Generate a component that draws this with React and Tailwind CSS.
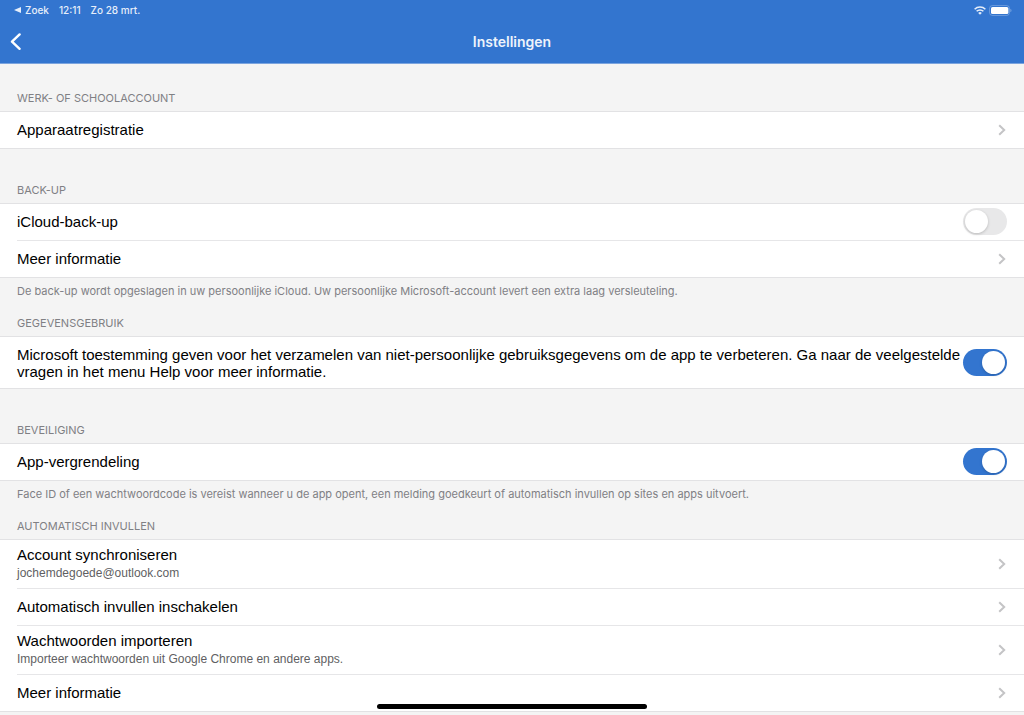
import React, { useState } from 'react';

const Chevron = () => (
    <svg className="mr-px h-3 w-2 shrink-0" viewBox="0 0 8 12" fill="none" stroke="#c4c4c6" strokeWidth="2" aria-hidden="true">
        <path d="M1.2 1.2 6.2 6 1.2 10.8" />
    </svg>
);

const Section = ({ title, compact, note, children }) => (
    <section>
        <h2 className={`flex items-end px-[17px] pb-[5px] font-[Inter,sans-serif] text-[11px] leading-4 text-[#808084] ${compact ? 'h-[30px]' : 'h-[54px]'}`}>
            {title}
        </h2>
        <div className="border-y border-[#e2e2e4] bg-white">{children}</div>
        {note && <p className="px-[17px] pt-[5px] pb-[7px] font-[Inter,sans-serif] text-[11px] leading-4 text-[#808084]">{note}</p>}
    </section>
);

const LinkRow = ({ label, detail, divider }) => (
    <div className="pl-[17px]">
        <button
            type="button"
            className={`box-content flex w-full items-center justify-between text-left ${detail ? 'h-12' : 'h-9'} ${divider ? 'border-t border-[#e6e6e8]' : ''}`}
        >
            <span className="flex flex-col">
                <span className="text-[15px] leading-[18px]">{label}</span>
                {detail && <span className="text-[12px] leading-[18px] text-[#5f5f63]">{detail}</span>}
            </span>
            <span className="pr-[17px]"><Chevron /></span>
        </button>
    </div>
);

const SwitchRow = ({ id, label, initial }) => {
    const [on, setOn] = useState(initial);

    return (
        <div className="flex min-h-9 items-center justify-between px-[17px] pb-px">
            <label htmlFor={id} className="text-[15px] leading-[17px]">{label}</label>
            <input
                id={id}
                type="checkbox"
                role="switch"
                checked={on}
                onChange={() => setOn(!on)}
                className="h-[27px] w-11 shrink-0 cursor-pointer appearance-none rounded-full bg-[#e8e8e9] p-[2px] transition-colors before:block before:size-[23px] before:rounded-full before:bg-white before:shadow-[0_1px_3px_rgba(0,0,0,0.2)] before:content-[''] checked:bg-[#3375cf] checked:before:ml-[17px]"
            />
        </div>
    );
};

const StatusBar = () => (
    <div className="flex h-5 items-center justify-between pr-3 pl-3.5 font-[Inter,sans-serif] text-[10px] font-medium text-[#e6eefa]">
        <div className="flex items-center">
            <svg className="mr-1 h-1.5 w-[7px]" viewBox="0 0 7 6" fill="currentColor" aria-hidden="true">
                <path d="M7 0v6L0 3z" />
            </svg>
            <span className="mr-2.5">Zoek</span>
            <span className="mr-2.5">12:11</span>
            <span>Zo 28 mrt.</span>
        </div>
        <div className="flex items-center gap-[3px]">
            <svg className="h-[9px] w-3" viewBox="0 0 12 9" fill="none" stroke="currentColor" strokeWidth="1.5" aria-hidden="true">
                <path d="M.6 3.3a7.6 7.6 0 0 1 10.8 0M2.6 5.3a4.8 4.8 0 0 1 6.8 0" />
                <path d="M4.2 6.9a2.5 2.5 0 0 1 3.6 0L6 8.8z" fill="currentColor" stroke="none" />
            </svg>
            <svg className="h-[11px] w-[23px]" viewBox="0 0 23 11" aria-hidden="true">
                <rect x=".5" y=".5" width="20" height="10" rx="3" fill="none" stroke="#fff" strokeOpacity=".25" />
                <rect x="2" y="2" width="17.4" height="7" rx="1.6" fill="#fff" />
                <path d="M21.5 3.8c1.2.5 1.2 2.9 0 3.4z" fill="#fff" fillOpacity=".45" />
            </svg>
        </div>
    </div>
);

const App = () => {
    return (
        <div className="min-h-screen bg-[#f4f4f4] font-['Liberation_Sans',Arial,sans-serif] text-black">
            <header className="h-16 border-b border-[#7ba4de] bg-[#3375cf]">
                <StatusBar />
                <div className="grid h-[43px] grid-cols-[1fr_auto_1fr] items-center px-2.5">
                    <button type="button" aria-label="Terug" className="justify-self-start">
                        <svg className="h-[17px] w-3" viewBox="0 0 12 17" fill="none" stroke="#fff" strokeWidth="2.4" strokeLinecap="round" strokeLinejoin="round">
                            <path d="M9.6 1.4 2 8.7l7.6 7.1" />
                        </svg>
                    </button>
                    <h1 className="font-[Inter,sans-serif] text-[14px] leading-5 font-semibold text-[#eef3fb]">Instellingen</h1>
                </div>
            </header>

            <main className="-mt-[7px]">
                <Section title="WERK- OF SCHOOLACCOUNT">
                    <LinkRow label="Apparaatregistratie" />
                </Section>

                <Section
                    title="BACK-UP"
                    note="De back-up wordt opgeslagen in uw persoonlijke iCloud. Uw persoonlijke Microsoft-account levert een extra laag versleuteling."
                >
                    <SwitchRow id="icloud" label="iCloud-back-up" initial={false} />
                    <LinkRow label="Meer informatie" divider />
                </Section>

                <Section title="GEGEVENSGEBRUIK" compact>
                    <div className="pt-2 pb-[7px]">
                        <SwitchRow
                            id="gebruik"
                            label="Microsoft toestemming geven voor het verzamelen van niet-persoonlijke gebruiksgegevens om de app te verbeteren. Ga naar de veelgestelde vragen in het menu Help voor meer informatie."
                            initial={true}
                        />
                    </div>
                </Section>

                <Section
                    title="BEVEILIGING"
                    note="Face ID of een wachtwoordcode is vereist wanneer u de app opent, een melding goedkeurt of automatisch invullen op sites en apps uitvoert."
                >
                    <SwitchRow id="vergrendeling" label="App-vergrendeling" initial={true} />
                </Section>

                <Section title="AUTOMATISCH INVULLEN" compact>
                    <LinkRow label="Account synchroniseren" detail="jochemdegoede@outlook.com" />
                    <LinkRow label="Automatisch invullen inschakelen" divider />
                    <LinkRow label="Wachtwoorden importeren" detail="Importeer wachtwoorden uit Google Chrome en andere apps." divider />
                    <LinkRow label="Meer informatie" divider />
                </Section>
            </main>

            <div className="fixed bottom-1.5 left-1/2 h-[5px] w-[270px] -translate-x-1/2 rounded-full bg-black"></div>
        </div>
    );
};

export default App;
